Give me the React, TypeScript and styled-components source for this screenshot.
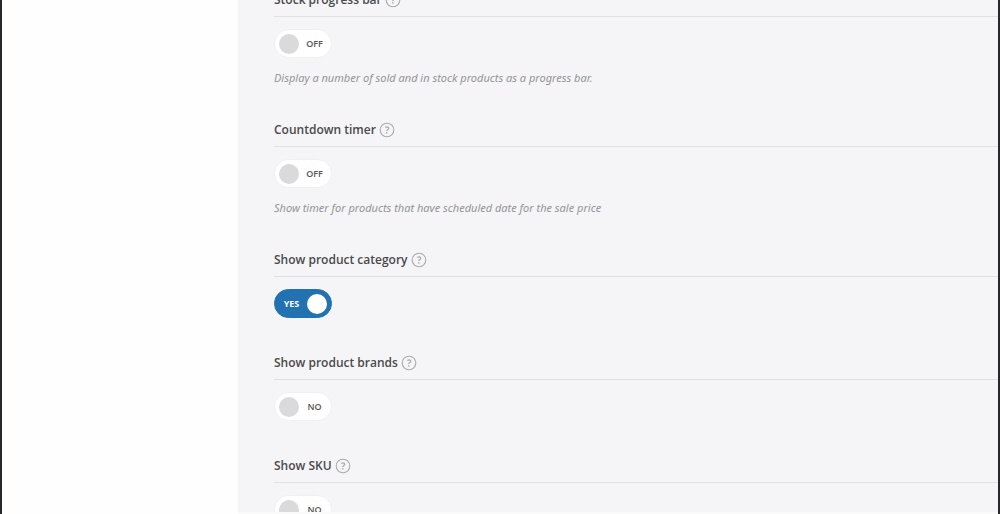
import React, { useState } from "react";
import styled, { createGlobalStyle } from "styled-components";

const GlobalStyle = createGlobalStyle`
  *, *::before, *::after { box-sizing: border-box; }
  body {
    margin: 0;
    background: #fefefe;
    font-family: "Open Sans", "Noto Sans", sans-serif;
    color: #444;
  }
`;

const Page = styled.div`
  display: grid;
  grid-template-columns: 236px 1fr;
  height: 100vh;
  overflow: hidden;
  border-left: 2px solid #26282b;
  border-right: 2px solid #26282b;
`;

const Sidebar = styled.aside`
  background: #fefefe;
`;

const Panel = styled.main`
  min-width: 0;
  overflow: hidden;
  background: #f5f5f7;
  border-bottom: 2px solid #fafafa;
`;

/* The list is scrolled a little, so the first heading is partly hidden. */
const FieldList = styled.div`
  display: flex;
  flex-direction: column;
  gap: 33px;
  margin-top: -12px;
  padding-left: 36px;
`;

const Field = styled.section`
  display: flex;
  flex-direction: column;
`;

const Heading = styled.header`
  display: flex;
  align-items: center;
  gap: 3px;
  padding-bottom: 4px;
  border-bottom: 1px solid #e1e1e3;
`;

const Title = styled.h3`
  margin: 0;
  font-size: 12px;
  line-height: 24px;
  font-weight: 600;
  color: #4a4a4a;
`;

const HelpButton = styled.button`
  display: flex;
  padding: 0;
  border: 0;
  background: none;
  color: #aaa;
  cursor: pointer;
`;

const Switch = styled.label<{ $on: boolean }>`
  display: flex;
  flex-direction: ${(p) => (p.$on ? "row-reverse" : "row")};
  align-items: center;
  align-self: flex-start;
  width: 58px;
  height: 29px;
  margin-top: 12px;
  padding: 0 4px;
  border: 1px solid ${(p) => (p.$on ? "#2271b1" : "#f0f0f2")};
  border-radius: 15px;
  background: ${(p) => (p.$on ? "#2271b1" : "#fff")};
  color: ${(p) => (p.$on ? "#fff" : "#555")};
  cursor: pointer;
`;

const Knob = styled.input<{ $on: boolean }>`
  appearance: none;
  flex: none;
  width: 20px;
  height: 20px;
  margin: 0;
  border-radius: 50%;
  background: ${(p) => (p.$on ? "#fff" : "#dadadd")};
  cursor: pointer;
`;

const SwitchText = styled.span<{ $on: boolean }>`
  flex: 1;
  padding: ${(p) => (p.$on ? "0 3px 0 0" : "0 0 0 3px")};
  text-align: center;
  font-size: 9px;
  line-height: 12px;
  font-weight: ${(p) => (p.$on ? 700 : 600)};
`;

const Description = styled.p`
  margin: 12px 0 0;
  font-family: "Noto Sans", "Open Sans", sans-serif;
  font-size: 11px;
  line-height: 15px;
  font-style: italic;
  color: #949496;
`;

function HelpIcon() {
  return (
    <svg width="16" height="16" viewBox="0 0 16 16" fill="none" stroke="currentColor" aria-hidden="true">
      <circle cx="8" cy="8" r="6.8" strokeWidth="1.1" />
      <path d="M6.3 5.5c.5-.5 1.1-.7 1.7-.7 1 0 1.7.6 1.7 1.4 0 1.4-1.9 1.4-1.9 2.9" strokeWidth="1.3" />
      <circle cx="7.8" cy="10.9" r=".8" fill="currentColor" stroke="none" />
    </svg>
  );
}

type FieldData = {
  id: string;
  title: string;
  on: string;
  off: string;
  value: boolean;
  description?: string;
};

const fields: FieldData[] = [
  {
    id: "stock-progress",
    title: "Stock progress bar",
    on: "ON",
    off: "OFF",
    value: false,
    description: "Display a number of sold and in stock products as a progress bar.",
  },
  {
    id: "countdown",
    title: "Countdown timer",
    on: "ON",
    off: "OFF",
    value: false,
    description: "Show timer for products that have scheduled date for the sale price",
  },
  { id: "category", title: "Show product category", on: "YES", off: "NO", value: true },
  { id: "brands", title: "Show product brands", on: "YES", off: "NO", value: false },
  { id: "sku", title: "Show SKU", on: "YES", off: "NO", value: false },
];

function SwitchField({ field }: { field: FieldData }) {
  const [on, setOn] = useState(field.value);
  return (
    <Field>
      <Heading>
        <Title id={`${field.id}-title`}>{field.title}</Title>
        <HelpButton type="button" aria-label={`Help: ${field.title}`}>
          <HelpIcon />
        </HelpButton>
      </Heading>
      <Switch $on={on} htmlFor={field.id}>
        <Knob
          id={field.id}
          type="checkbox"
          aria-labelledby={`${field.id}-title`}
          $on={on}
          checked={on}
          onChange={(e) => setOn(e.target.checked)}
        />
        <SwitchText $on={on}>{on ? field.on : field.off}</SwitchText>
      </Switch>
      {field.description && <Description>{field.description}</Description>}
    </Field>
  );
}

export default function App() {
  return (
    <>
      <GlobalStyle />
      <Page>
        <Sidebar />
        <Panel>
          <FieldList>
            {fields.map((field) => (
              <SwitchField key={field.id} field={field} />
            ))}
          </FieldList>
        </Panel>
      </Page>
    </>
  );
}
